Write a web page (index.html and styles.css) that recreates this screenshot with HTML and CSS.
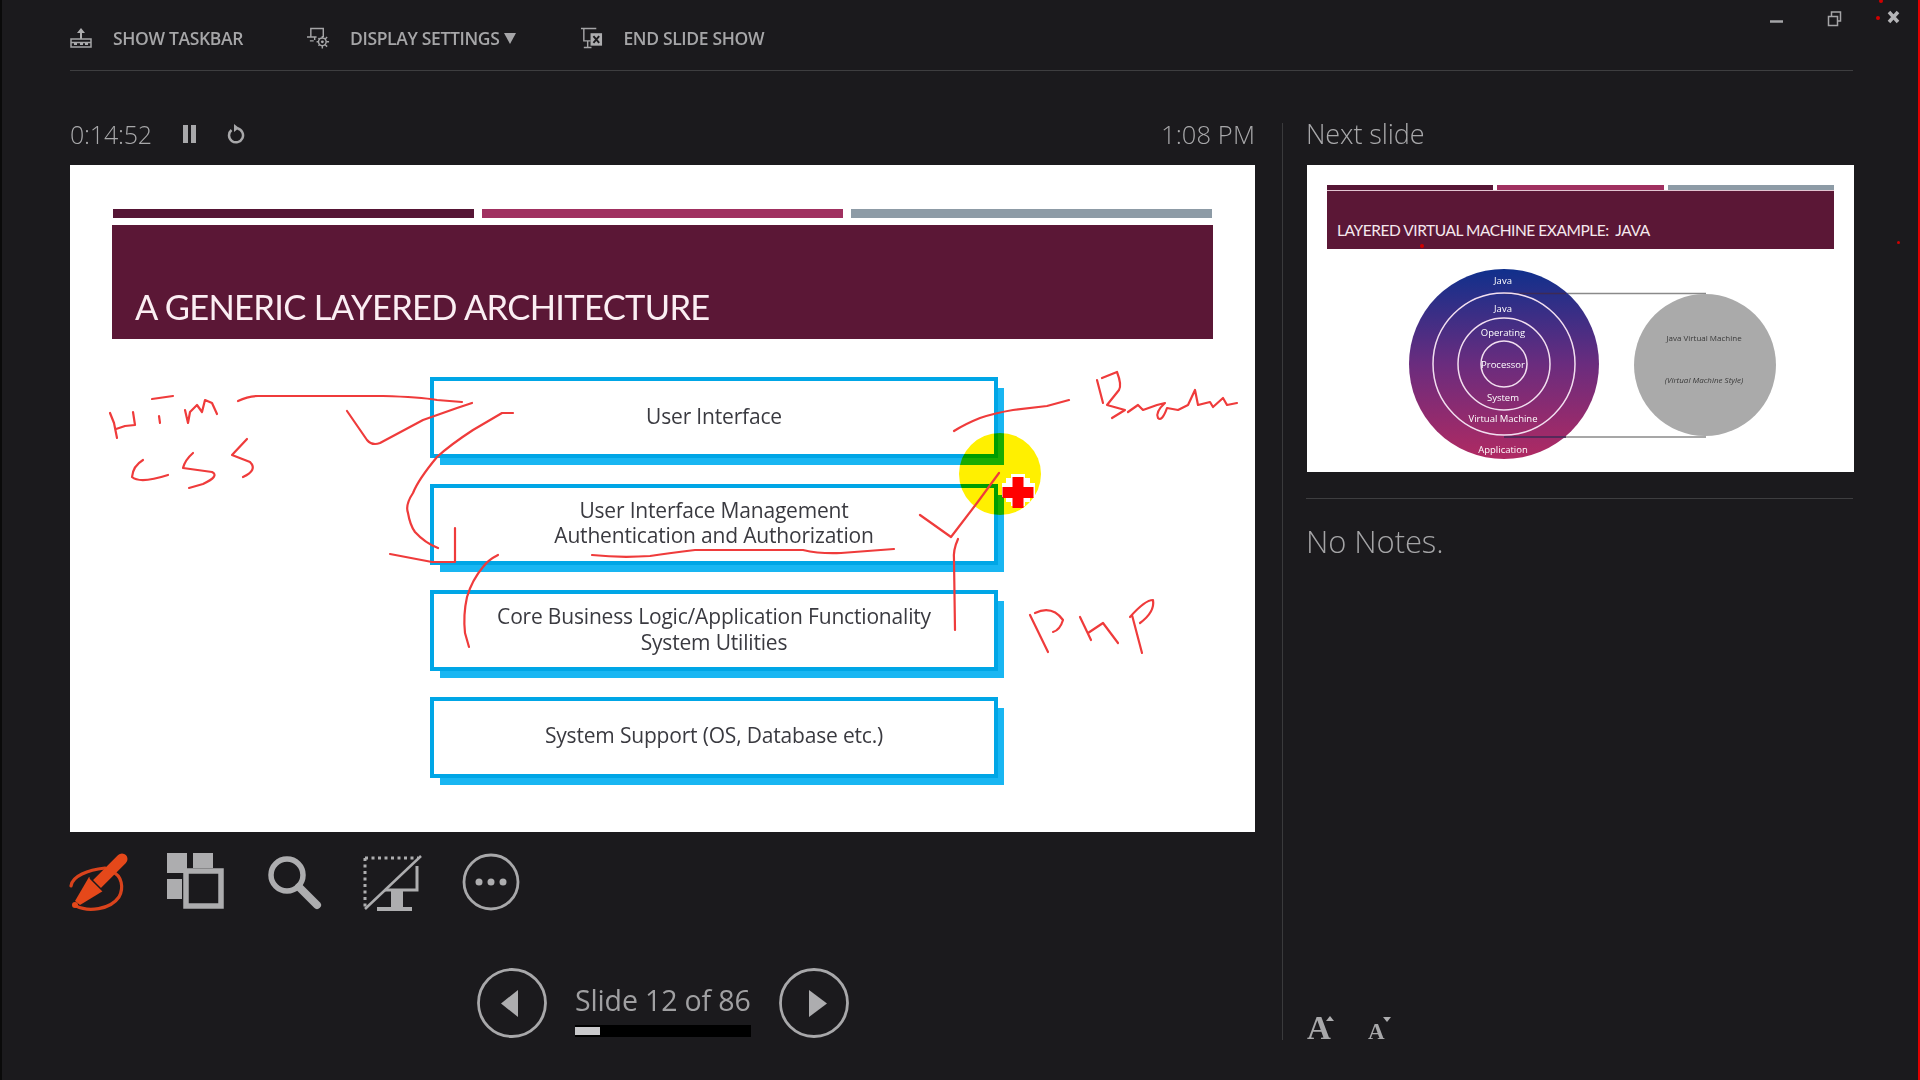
FILE: index.html
```html
<!DOCTYPE html>
<html lang="en">
<head>
<meta charset="utf-8">
<title>Presenter View</title>
<link rel="stylesheet" href="styles.css">
</head>
<body>
<div class="app">
  <header class="topbar">
    <div class="tool tool-a">
      <svg class="ticon" viewBox="70 26 23 24"><path class="f" d="M81 28l4 5h-3v6h-2v-6h-3z"/><rect class="s" x="71" y="39" width="20" height="8"/><path class="s" d="M71 42.500h20"/><path class="f" d="M74 43h3v2h-3zM80 43h3v2h-3zM85 43h3v2h-3z"/></svg>
      <span>SHOW TASKBAR</span>
    </div>
    <div class="tool tool-b">
      <svg class="ticon" viewBox="307 26 24 24"><path class="s" d="M311 37v-9h13v9M307 37h10M315 37v3M310 41h4"/><circle class="s" cx="323" cy="42" r="4"/><circle class="f" cx="323" cy="42" r="1.500"/><path class="s" d="M323 36v2M323 46v3M317 42h2M327 42h3M319 38l1 1M326 45l2 2M319 46l1-1M326 39l2-2"/></svg>
      <span>DISPLAY SETTINGS</span><i class="caret"></i>
    </div>
    <div class="tool tool-c">
      <svg class="ticon" viewBox="581 26 24 24"><path class="s" d="M582 28h16M585 28v13h7M589 41v6M585 48h8"/><rect class="f" x="592" y="33" width="12" height="13"/><path class="x" d="M595 36l6 7M601 36l-6 7"/></svg>
      <span>END SLIDE SHOW</span>
    </div>
  </header>

  <div class="winctl">
    <svg viewBox="1765 5 140 30"><path class="s wm" d="M1770 21.500h13"/><path class="s wr" d="M1828.500 16.500h9v9h-9zM1831.500 16v-4h9v9h-3"/><path class="wx" d="M1889 12l9 10M1898 12l-9 10"/></svg>
  </div>

  <main class="main">
    <section class="presenter">
      <div class="timer">
        <div class="timer-left">
          <span class="clock">0:14:52</span>
          <svg class="pause" viewBox="0 0 13 18"><path d="M0 0h5v18H0zM8 0h5v18H8z"/></svg>
          <svg class="reset" viewBox="0 0 18 20"><path d="M10.500 4.500A7 7 0 1 1 4.500 6" /><path class="head" d="M7 0v8l5-4z"/></svg>
        </div>
        <span class="clock clock-time">1:08 PM</span>
      </div>

      <div class="slide">
        <div class="bars">
          <i class="bar b1"></i><i class="bar b2"></i><i class="bar b3"></i>
        </div>
        <div class="banner"><h1>A GENERIC LAYERED ARCHITECTURE</h1></div>
        <div class="layers">
          <div class="layer">User Interface</div>
          <div class="layer">User Interface Management<br>Authentication and Authorization</div>
          <div class="layer">Core Business Logic/Application Functionality<br>System Utilities</div>
          <div class="layer">System Support (OS, Database etc.)</div>
        </div>
        <svg class="spot" viewBox="70 165 1185 667"><circle cx="1000" cy="474" r="41"/></svg>
        <svg class="ink" viewBox="70 165 1185 667">
          <path d="M110 413L114 423L117 438M116 429L125 426L135 425M133 412L135 425M152 399L173 396M159 416L160 423M185 410L188 423L190 412L197 405L202 412L205 400L212 403L217 414"/>
          <path d="M143 460Q133 466 132 477Q140 484 168 475M193 453Q185 460 183 468L212 472Q220 476 203 484L189 488M247 439L232 455L250 462Q258 470 243 477"/>
          <path d="M238 401Q248 396 258 396L383 396Q420 397 437 400L462 402"/>
          <path d="M347 411L367 440Q372 446 380 443L423 420L457 408L472 403"/>
          <path d="M513 413L502 413L473 430Q450 445 437 457Q418 480 413 493Q405 505 408 513Q410 525 415 532Q425 543 438 548"/>
          <path d="M455 528L455 562L432 562L390 554"/>
          <path d="M498 555Q488 560 483 567Q472 580 467 597Q463 615 465 633L469 647"/>
          <path d="M592 555Q620 558 650 556Q670 553 695 550L803 550Q820 554 841 553L894 549"/>
          <path d="M954 431Q965 424 980 418Q995 413 1013 410L1047 406L1069 400"/>
          <path d="M920 515L951 537L977 503L999 473"/>
          <path d="M958 539Q953 550 954 560L955 630"/>
          <path d="M1097 380L1103 403M1102 378L1117 372Q1122 385 1119 390L1107 405L1125 410L1112 418M1128 412L1138 405L1143 410L1157 405L1165 403Q1155 412 1158 418Q1162 422 1167 408L1178 410L1188 405L1195 390L1198 405L1210 402L1213 407L1223 398L1227 405L1237 403"/>
          <path d="M1030 615L1048 652M1035 613Q1052 605 1063 620Q1060 630 1053 632M1080 617L1091 640M1088 633L1103 623L1118 643M1132 615L1142 653M1130 617Q1145 600 1153 600Q1155 612 1140 623"/>
        </svg>
        <svg class="cursor" viewBox="1000 472 40 40"><path class="cw" d="M1011 474h14v4h5v5h5v14h-5v5h-5v4h-14v-4h-5v-5h-4v-14h4v-5h5z"/><path class="cr" d="M1012.500 477h11v10h10v11h-10v10h-11v-10h-10v-11h10z"/></svg>
      </div>

      <div class="actions">
        <svg viewBox="70 853 57 57"><path class="pen-ring" d="M71 886C72 876 88 870 105 868M112 872C122 875 124 888 119 897C110 910 88 912 76 906"/><path class="pen-body" d="M122 859L97 884"/><path class="pen-tip" d="M89 877L103 891L80 905L75 901z"/><circle class="pen-fill" cx="75" cy="905" r="3"/><path class="pen-gap" d="M90 878L104 892"/></svg>
        <svg viewBox="167 853 57 57"><path class="f" d="M167 853h20v20h-20zM193 853h20v15h-20zM167 879h15v20h-15z"/><rect class="st5" x="186" y="871" width="35" height="35"/></svg>
        <svg viewBox="264 853 57 57"><circle class="st5" cx="287" cy="875" r="16"/><path class="st8" d="M299 887l18 18"/></svg>
        <svg viewBox="361 853 57 57"><path class="dots" d="M365 858H418M365 858V908"/><path class="st2" d="M365 909L421 856"/><path class="st3" d="M417 866V890H385"/><path class="f" d="M391 891h12v17h-12zM377 907h35v4h-35z"/></svg>
        <svg viewBox="458 853 57 57"><circle class="st25" cx="491" cy="882" r="27"/><circle class="f" cx="479" cy="882" r="3.500"/><circle class="f" cx="491" cy="882" r="3.500"/><circle class="f" cx="503" cy="882" r="3.500"/></svg>
      </div>

      <div class="pager">
        <svg class="navbtn" viewBox="477 968 70 70"><circle class="st25" cx="512" cy="1003" r="33.500"/><path class="f" d="M501 1003.500L518 990V1017z"/></svg>
        <div class="pager-mid">
          <span class="count">Slide 12 of 86</span>
          <div class="track"><div class="fill"></div></div>
        </div>
        <svg class="navbtn" viewBox="779 968 70 70"><circle class="st25" cx="814" cy="1003" r="33.500"/><path class="f" d="M809 990L827 1003.500L809 1017z"/></svg>
      </div>
    </section>

    <aside class="side">
      <div class="timer"><span class="clock clock-next">Next slide</span></div>
      <div class="thumb">
        <div class="tbars"><i class="tbar b1"></i><i class="tbar b2"></i><i class="tbar b3"></i></div>
        <div class="tbanner">LAYERED VIRTUAL MACHINE EXAMPLE:&nbsp; JAVA</div>
        <svg class="tdiagram" viewBox="1306 249 547 223">
          <defs><linearGradient id="vm" x1="0" y1="0" x2="0" y2="1"><stop offset="0" stop-color="#10308c"/><stop offset=".5" stop-color="#6a2c7e"/><stop offset="1" stop-color="#b02a62"/></linearGradient></defs>
          <path class="tline" d="M1503 293.500H1705M1503 437H1705"/>
          <circle cx="1503" cy="364" r="95" fill="url(#vm)"/>
          <path class="tline dark" d="M1503 293.500H1565M1503 437H1565"/>
          <circle class="ring" cx="1503" cy="364" r="71"/>
          <circle class="ring" cx="1503" cy="364" r="46"/>
          <circle class="ring" cx="1503" cy="364" r="23"/>
          <circle cx="1704" cy="365" r="71" fill="#aaaaaa"/>
          <text class="tw" x="1502" y="284">Java</text>
          <text class="tw" x="1502" y="312">Java</text>
          <text class="tw" x="1502" y="336">Operating</text>
          <text class="tw" x="1502" y="368">Processor</text>
          <text class="tw" x="1502" y="401">System</text>
          <text class="tw" x="1502" y="422">Virtual Machine</text>
          <text class="tw" x="1502" y="453">Application</text>
          <text class="tk" x="1703" y="341">Java Virtual Machine</text>
          <text class="tk it" x="1703" y="383">(Virtual Machine Style)</text>
        </svg>
      </div>
      <div class="notes">No Notes.</div>
      <div class="fontbtns">
        <svg viewBox="1306 1000 90 40">
          <text class="aa big" x="1307" y="1039">A</text><path class="f" d="M1326 1021L1330 1016L1334 1021z"/>
          <text class="aa small" x="1368" y="1039">A</text><path class="f" d="M1383 1017H1391L1387 1022z"/>
        </svg>
      </div>
    </aside>
  </main>

  <i class="speck s1"></i><i class="speck s2"></i><i class="speck s3"></i><i class="speck s4"></i>
</div>
</body>
</html>
```

FILE: styles.css
```css
* { box-sizing: border-box; }
html, body { margin: 0; padding: 0; background: #1b1a1d; }
body { width: 1920px; height: 1080px; overflow: hidden; }

.app {
  position: relative;
  width: 1920px;
  height: 1080px;
  display: flex;
  flex-direction: column;
  background: #1b1a1d;
  border-left: 2px solid #0a0a0a;
  border-right: 2px solid #e00000;
  padding: 0 65px 0 68px;
  font-family: "Open Sans", "Liberation Sans", sans-serif;
  color: #9c9c9e;
  filter: blur(.45px);
}

svg { display: block; }
.f { fill: #adadaf; stroke: none; }
.s { fill: none; stroke: #a5a5a7; stroke-width: 1.500; }
.x { fill: none; stroke: #1b1a1d; stroke-width: 2; }

.topbar {
  height: 71px;
  flex: none;
  display: flex;
  align-items: flex-start;
  padding-top: 26px;
  border-bottom: 1.500px solid #3e3e40;
}
.tool {
  display: flex;
  align-items: center;
  height: 24px;
  font-size: 17.500px;
  font-weight: 600;
  letter-spacing: -.35px;
  color: #a6a6a8;
  white-space: nowrap;
}
.ticon { width: 23px; height: 24px; margin-right: 20px; flex: none; }
.tool-b { margin-left: 64px; }
.tool-c { margin-left: 64px; }
.caret {
  width: 0; height: 0; margin-left: 5px;
  border-left: 6.500px solid transparent;
  border-right: 6.500px solid transparent;
  border-top: 11px solid #a6a6a8;
}

.winctl { position: absolute; left: 1763px; top: 5px; width: 140px; height: 30px; }
.wm { stroke-width: 2.500; }
.wr { stroke-width: 1.500; }
.wx { fill: none; stroke: #b5b5b7; stroke-width: 3.500; }

.main {
  flex: 1;
  display: grid;
  grid-template-columns: 1185px 571px;
  column-gap: 27px;
  padding-top: 52px;
  min-height: 0;
}

.timer {
  height: 42px;
  display: flex;
  align-items: flex-start;
  justify-content: space-between;
}
.timer-left { display: flex; align-items: center; }
.clock {
  font-size: 25px;
  line-height: 22px;
  font-weight: 300;
  letter-spacing: -.2px;
  color: #a8a8aa;
  white-space: nowrap;
}
.clock-time { font-size: 25.500px; letter-spacing: .1px; }
.clock-next { font-size: 27px; line-height: 22px; margin-left: -1px; letter-spacing: -.1px; }
.pause { width: 13px; height: 18px; margin-left: 31px; fill: #a8a8aa; }
.reset { width: 18px; height: 20px; margin-left: 31px; fill: none; stroke: #a8a8aa; stroke-width: 2.500; }
.reset .head { fill: #a8a8aa; stroke: none; }

.slide {
  position: relative;
  width: 1185px;
  height: 667px;
  padding: 44px 43px 0 43px;
  background: #fff;
  overflow: hidden;
}
.bars { display: flex; gap: 8px; height: 9px; }
.bar { flex: 1; }
.b1 { background: #561535; }
.b2 { background: #a03060; }
.b3 { background: #8d9ba6; }
.banner {
  height: 114px;
  margin: 7px -1px 0 -1.500px;
  padding-left: 23.500px;
  background: #5b1736;
  display: flex;
  align-items: flex-end;
}
.banner h1 {
  margin: 0 0 10px;
  font-family: Lato, "Liberation Sans", sans-serif;
  font-size: 34.500px;
  line-height: 44px;
  font-weight: 400;
  letter-spacing: -.68px;
  color: #fbeef3;
  white-space: nowrap;
}
.layers {
  margin: 38px 0 0 317px;
  width: 568px;
  display: flex;
  flex-direction: column;
  gap: 25.500px;
}
.layer {
  height: 81px;
  border: 4px solid #00a6e6;
  background: #fff;
  box-shadow: 8px 9px 0 -2px #19b6f2;
  display: flex;
  align-items: center;
  justify-content: center;
  text-align: center;
  font-size: 21px;
  line-height: 25.500px;
  letter-spacing: -.18px;
  color: #3a3a40;
  padding-bottom: 2px;
}
.spot, .ink, .cursor { position: absolute; left: 0; top: 0; }
.spot, .ink { width: 1185px; height: 667px; }
.spot { mix-blend-mode: multiply; }
.spot circle { fill: #fff000; }
.ink path { fill: none; stroke: #ef3b3b; stroke-width: 2.200; stroke-linejoin: round; stroke-linecap: round; }
.cursor { left: 930px; top: 307px; width: 40px; height: 40px; }
.cw { fill: #fff; }
.cr { fill: #ff0000; }

.actions { display: flex; gap: 40px; margin-top: 21px; height: 60px; align-items: flex-start; }
.actions svg { width: 57px; height: 57px; flex: none; overflow: visible; }
.st5 { fill: none; stroke: #adadaf; stroke-width: 5.500; }
.st8 { fill: none; stroke: #adadaf; stroke-width: 8; stroke-linecap: round; }
.st2 { fill: none; stroke: #adadaf; stroke-width: 2.500; }
.st3 { fill: none; stroke: #adadaf; stroke-width: 3; }
.st25 { fill: none; stroke: #a8a8aa; stroke-width: 2.800; }
.dots { fill: none; stroke: #adadaf; stroke-width: 3; stroke-dasharray: 3 3.500; }
.pen-ring { fill: none; stroke: #d9431c; stroke-width: 3.200; stroke-linecap: round; }
.pen-body { fill: none; stroke: #e5481a; stroke-width: 11; stroke-linecap: round; }
.pen-tip, .pen-fill { fill: #e5481a; }
.pen-gap { stroke: #1b1a1d; stroke-width: 1.500; fill: none; }

.pager { display: flex; align-items: flex-start; margin: 55px 0 0 407px; gap: 28px; }
.navbtn { width: 70px; height: 70px; flex: none; }
.pager-mid { width: 176px; padding-top: 13px; }
.count {
  display: block;
  font-size: 28.500px;
  line-height: 38px;
  font-weight: 400;
  letter-spacing: -.14px;
  color: #a0a0a2;
  white-space: nowrap;
}
.track { height: 12px; margin-top: 6px; background: #000; padding: 2px 0; }
.fill { width: 25px; height: 8px; background: #c9c9cb; }

.side {
  display: flex;
  flex-direction: column;
  padding-left: 24px;
  border-left: 1.500px solid #3a3a3c;
  height: 917px;
}
.thumb {
  width: 547px;
  height: 307px;
  flex: none;
  background: #fff;
  padding: 20px 20px 0 20px;
  position: relative;
  overflow: hidden;
}
.tbars { display: flex; gap: 4px; height: 5px; }
.tbar { flex: 1; }
.tbanner {
  height: 59px;
  border-top: 1.500px solid #e3c4d1;
  padding: 28.500px 0 0 10px;
  background: #5b1736;
  font-family: Lato, "Liberation Sans", sans-serif;
  font-size: 15.500px;
  line-height: 20px;
  letter-spacing: -.45px;
  color: #f5e9ee;
  white-space: nowrap;
}
.tdiagram { position: absolute; left: 0; top: 84px; width: 547px; height: 223px; }
.tline { fill: none; stroke: #8a8a8a; stroke-width: 1.500; }
.tline.dark { stroke: #3e2a55; }
.ring { fill: none; stroke: #f2dff0; stroke-width: 1.500; }
.tw { font-size: 9.500px; fill: #fff; text-anchor: middle; }
.tk { font-size: 8px; fill: #3a3a3a; text-anchor: middle; }
.it { font-style: italic; }

.notes {
  margin-top: 26px;
  padding-top: 23px;
  margin-left: -1px;
  border-top: 1.500px solid #3e3e40;
  font-size: 31px;
  line-height: 38px;
  font-weight: 300;
  letter-spacing: -.1px;
  color: #a4a4a6;
}
.fontbtns { margin-top: auto; margin-left: -1px; }
.fontbtns svg { width: 90px; height: 40px; overflow: visible; }
.aa { font-family: "Liberation Serif", serif; font-weight: 700; fill: #a8a8aa; }
.big { font-size: 33px; }
.small { font-size: 23px; }

.speck { position: absolute; width: 4px; height: 4px; border-radius: 50%; background: #d00000; }
.s1 { left: 1877px; top: -1px; }
.s2 { left: 1874px; top: 16px; }
.s3 { left: 1895px; top: 241px; width: 3px; height: 3px; }
.s4 { left: 1418px; top: 244px; }
```
